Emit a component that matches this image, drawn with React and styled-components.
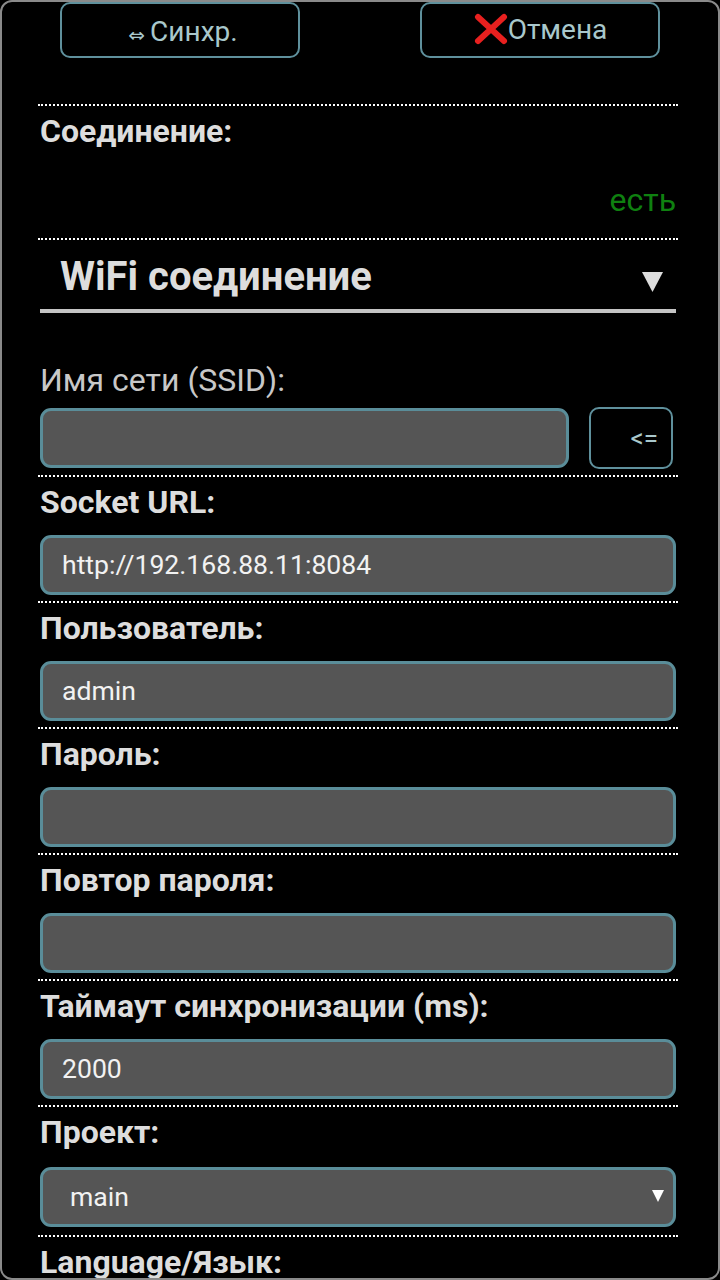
import React from "react";
import styled, { createGlobalStyle } from "styled-components";

const Global = createGlobalStyle`
  html, body { margin: 0; padding: 0; background: #000; }
  * { box-sizing: border-box; }
`;

const Screen = styled.div`
  width: 720px;
  height: 1280px;
  overflow: hidden;
  background: #000;
  border: 2px solid #8a8a8a;
  border-radius: 12px;
  font-family: Roboto, "Noto Sans", sans-serif;
  color: #ddd;
`;

const Toolbar = styled.div`
  display: flex;
  justify-content: space-between;
  padding: 0 58px;
  height: 102px;
`;

const ToolButton = styled.div`
  width: 240px;
  height: 56px;
  border: 2px solid #5f909c;
  border-radius: 10px;
  color: #a9c8cc;
  font-size: 28px;
  display: flex;
  align-items: center;
  justify-content: center;
  padding: ${(p) => (p.$up ? "0 0 2px 1px" : "3px 0 0 6px")};
`;

const SyncGlyph = styled.span`
  font-size: 20px;
  margin: 6px 5px 0 0;
  font-family: "DejaVu Sans", sans-serif;
`;

const CrossIcon = styled.svg`
  width: 34px;
  height: 32px;
`;

const Section = styled.section`
  margin: 0 40px 0 36px;
  border-top: 2px dotted #fff;
  height: ${(p) => p.$h || 126}px;
  padding: 0 2px;
`;

const Label = styled.div`
  font-size: 32px;
  font-weight: 700;
  line-height: 32px;
  color: #ddd;
  padding-top: 9px;
  height: ${(p) => p.$h || 58}px;
`;

const Status = styled.div`
  text-align: right;
  color: #0f8010;
  font-size: 32px;
  line-height: 32px;
  padding-top: 20px;
`;

const SectionHead = styled.div`
  display: flex;
  justify-content: space-between;
  align-items: center;
  height: 73px;
  border-bottom: 4px solid #c4c4c4;
  margin-bottom: 59px;
  padding: 3px 12px 0 20px;
  font-size: 40px;
  font-weight: 700;
  color: #ddd;
`;

const HeadCaret = styled.svg`
  width: 22px;
  height: 22px;
  margin-top: 11px;
`;

const Hint = styled.div`
  font-size: 32px;
  line-height: 36px;
  color: #c8c8c8;
  height: 45px;
  margin-top: -10px;
`;

const FieldRow = styled.div`
  display: flex;
  align-items: center;
  justify-content: space-between;
  padding-right: 3px;
`;

const Field = styled.div`
  width: ${(p) => p.$w || 636}px;
  height: 60px;
  background: #555;
  border: 3px solid #5a8d99;
  border-radius: 11px;
  color: #f2f2f2;
  font-size: 26.6px;
  padding: 0 0 2px ${(p) => p.$pad || 19}px;
  display: flex;
  align-items: center;
  justify-content: space-between;
`;

const SmallButton = styled.div`
  width: 84px;
  height: 62px;
  border: 2px solid #5f909c;
  border-radius: 10px;
  color: #a9c8cc;
  font-size: 26px;
  display: flex;
  align-items: center;
  justify-content: flex-end;
  padding-right: 13px;
`;

const SelectCaret = styled.svg`
  width: 12px;
  height: 12px;
  margin-right: 9px;
`;

const fields = [
  { label: "Socket URL:", value: "http://192.168.88.11:8084" },
  { label: "Пользователь:", value: "admin" },
  { label: "Пароль:", value: "" },
  { label: "Повтор пароля:", value: "" },
  { label: "Таймаут синхронизации (ms):", value: "2000" },
];

export default function App() {
  return (
    <>
      <Global />
      <Screen>
        <Toolbar>
          <ToolButton>
            <SyncGlyph>⇔</SyncGlyph>Синхр.
          </ToolButton>
          <ToolButton $up>
            <CrossIcon viewBox="0 0 34 32">
              <path d="M4 4 L30 28 M30 4 L4 28" stroke="#e8201f" strokeWidth="6" strokeLinecap="round" fill="none" />
            </CrossIcon>
            Отмена
          </ToolButton>
        </Toolbar>
        <Section $h={134}>
          <Label>Соединение:</Label>
          <Status>есть</Status>
        </Section>
        <Section $h={237}>
          <SectionHead>
            WiFi соединение
            <HeadCaret viewBox="0 0 22 22">
              <path d="M0 1 H21 L10.5 21 Z" fill="#ddd" />
            </HeadCaret>
          </SectionHead>
          <Hint>Имя сети (SSID):</Hint>
          <FieldRow>
            <Field $w={529} />
            <SmallButton>&lt;=</SmallButton>
          </FieldRow>
        </Section>
        {fields.map((f) => (
          <Section key={f.label}>
            <Label>{f.label}</Label>
            <Field>{f.value}</Field>
          </Section>
        ))}
        <Section $h={130}>
          <Label $h={60}>Проект:</Label>
          <Field $pad={27}>
            main
            <SelectCaret viewBox="0 0 12 12">
              <path d="M0 0 H12 L6 12 Z" fill="#fff" />
            </SelectCaret>
          </Field>
        </Section>
        <Section>
          <Label>Language/Язык:</Label>
        </Section>
      </Screen>
    </>
  );
}
